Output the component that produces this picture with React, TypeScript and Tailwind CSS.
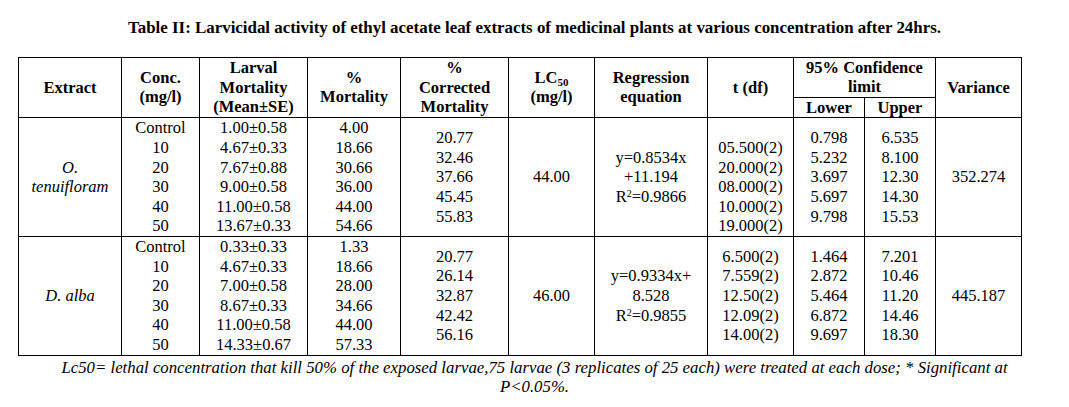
import React from "react";

type Group = {
  name: React.ReactNode;
  conc: string[];
  larval: string[];
  mort: string[];
  corrected: string[];
  lc50: string;
  regression: React.ReactNode;
  tdf: string[];
  lower: string[];
  upper: string[];
  variance: string;
};

const groups: Group[] = [
  {
    name: (
      <>
        O.
        <br />
        tenuifloram
      </>
    ),
    conc: ["Control", "10", "20", "30", "40", "50"],
    larval: ["1.00±0.58", "4.67±0.33", "7.67±0.88", "9.00±0.58", "11.00±0.58", "13.67±0.33"],
    mort: ["4.00", "18.66", "30.66", "36.00", "44.00", "54.66"],
    corrected: ["20.77", "32.46", "37.66", "45.45", "55.83"],
    lc50: "44.00",
    regression: (
      <>
        y=0.8534x
        <br />
        +11.194
        <br />
        R<sup className="text-[10px]">2</sup>=0.9866
      </>
    ),
    tdf: ["\u00a0", "05.500(2)", "20.000(2)", "08.000(2)", "10.000(2)", "19.000(2)"],
    lower: ["0.798", "5.232", "3.697", "5.697", "9.798"],
    upper: ["6.535", "8.100", "12.30", "14.30", "15.53"],
    variance: "352.274",
  },
  {
    name: <>D. alba</>,
    conc: ["Control", "10", "20", "30", "40", "50"],
    larval: ["0.33±0.33", "4.67±0.33", "7.00±0.58", "8.67±0.33", "11.00±0.58", "14.33±0.67"],
    mort: ["1.33", "18.66", "28.00", "34.66", "44.00", "57.33"],
    corrected: ["20.77", "26.14", "32.87", "42.42", "56.16"],
    lc50: "46.00",
    regression: (
      <>
        y=0.9334x+
        <br />
        8.528
        <br />
        R<sup className="text-[10px]">2</sup>=0.9855
      </>
    ),
    tdf: ["6.500(2)", "7.559(2)", "12.50(2)", "12.09(2)", "14.00(2)"],
    lower: ["1.464", "2.872", "5.464", "6.872", "9.697"],
    upper: ["7.201", "10.46", "11.20", "14.46", "18.30"],
    variance: "445.187",
  },
];

const th = "border border-black p-0 align-middle text-center font-bold";
const td = "border border-black p-0 align-middle text-center";

function Lines({ items }: { items: string[] }) {
  return (
    <>
      {items.map((v, i) => (
        <div key={i}>{v}</div>
      ))}
    </>
  );
}

export default function App() {
  return (
    <div className="w-[1069px] h-[407px] bg-white text-black font-['Liberation_Serif',serif] text-[16.5px] leading-[19.6px]">
      {/* title */}
      <div className="pt-[18px] pb-[19px] text-center font-bold text-[16.9px]">
        Table II: Larvicidal activity of ethyl acetate leaf extracts of medicinal plants at various concentration after 24hrs.
      </div>

      <div className="pl-[18px]">
        <table className="table-fixed border-collapse w-[1004px]">
          <colgroup>
            <col className="w-[103px]" />
            <col className="w-[78px]" />
            <col className="w-[108px]" />
            <col className="w-[93px]" />
            <col className="w-[108px]" />
            <col className="w-[86px]" />
            <col className="w-[113px]" />
            <col className="w-[86px]" />
            <col className="w-[71px]" />
            <col className="w-[71px]" />
            <col className="w-[86px]" />
          </colgroup>
          <thead>
            <tr className="h-[40px]">
              <th rowSpan={2} className={th}>Extract</th>
              <th rowSpan={2} className={th}>
                Conc.
                <br />
                (mg/l)
              </th>
              <th rowSpan={2} className={th}>
                Larval
                <br />
                Mortality
                <br />
                (Mean±SE)
              </th>
              <th rowSpan={2} className={th}>
                %
                <br />
                Mortality
              </th>
              <th rowSpan={2} className={th}>
                %
                <br />
                Corrected
                <br />
                Mortality
              </th>
              <th rowSpan={2} className={th}>
                LC<sub className="text-[11px]">50</sub>
                <br />
                (mg/l)
              </th>
              <th rowSpan={2} className={th}>
                Regression
                <br />
                equation
              </th>
              <th rowSpan={2} className={th}>t (df)</th>
              <th colSpan={2} className={th}>
                95% Confidence
                <br />
                limit
              </th>
              <th rowSpan={2} className={th}>Variance</th>
            </tr>
            <tr className="h-[20px]">
              <th className={th}>Lower</th>
              <th className={th}>Upper</th>
            </tr>
          </thead>
          <tbody>
            {groups.map((g, i) => (
              <tr key={i}>
                <td className={`${td} italic`}>{g.name}</td>
                <td className={td}>
                  <Lines items={g.conc} />
                </td>
                <td className={td}>
                  <Lines items={g.larval} />
                </td>
                <td className={td}>
                  <Lines items={g.mort} />
                </td>
                <td className={td}>
                  <Lines items={g.corrected} />
                </td>
                <td className={td}>{g.lc50}</td>
                <td className={td}>{g.regression}</td>
                <td className={td}>
                  <Lines items={g.tdf} />
                </td>
                <td className={td}>
                  <Lines items={g.lower} />
                </td>
                <td className={td}>
                  <Lines items={g.upper} />
                </td>
                <td className={td}>{g.variance}</td>
              </tr>
            ))}
          </tbody>
        </table>
      </div>

      {/* footnote */}
      <div className="mx-auto w-[990px] pt-[2px] text-center italic text-[16.8px]">
        Lc50= lethal concentration that kill 50% of the exposed larvae,75 larvae (3 replicates of 25 each) were treated at each dose; * Significant at P&lt;0.05%.
      </div>
    </div>
  );
}
